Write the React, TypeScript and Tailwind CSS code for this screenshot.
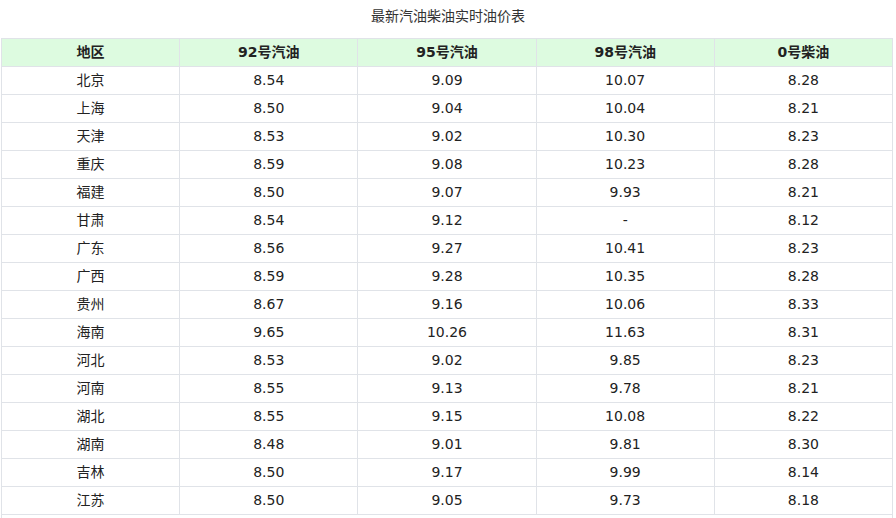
const rows: string[][] = [
["北京","8.54","9.09","10.07","8.28"],["上海","8.50","9.04","10.04","8.21"],["天津","8.53","9.02","10.30","8.23"],["重庆","8.59","9.08","10.23","8.28"],["福建","8.50","9.07","9.93","8.21"],["甘肃","8.54","9.12","-","8.12"],["广东","8.56","9.27","10.41","8.23"],["广西","8.59","9.28","10.35","8.28"],["贵州","8.67","9.16","10.06","8.33"],["海南","9.65","10.26","11.63","8.31"],["河北","8.53","9.02","9.85","8.23"],["河南","8.55","9.13","9.78","8.21"],["湖北","8.55","9.15","10.08","8.22"],["湖南","8.48","9.01","9.81","8.30"],["吉林","8.50","9.17","9.99","8.14"],["江苏","8.50","9.05","9.73","8.18"]];
export default function App(){
  return (<div className="w-[896px] h-[518px] overflow-hidden bg-white text-[#222]" style={{fontFamily:'Verdana,"DejaVu Sans","Noto Sans CJK SC",sans-serif'}}>
    <div className="h-[31px] pt-[6px] text-center text-[14px] text-[#333]">最新汽油柴油实时油价表</div>
    <table className="ml-[1px] w-[892px] border-collapse text-[14px] table-fixed mt-[7px]">
      <thead><tr className="bg-[#ddfbe0]">{["地区","92号汽油","95号汽油","98号汽油","0号柴油"].map(h=><th key={h} className="h-[28px] border border-[#e0e3e8] font-bold p-0">{h}</th>)}</tr></thead>
      <tbody>{rows.map(r=><tr key={r[0]}>{r.map((c,i)=><td key={i} className="h-[28px] border border-[#e0e3e8] text-center p-0">{c}</td>)}</tr>)}
      <tr><td colSpan={5} className="h-[28px] border border-[#e0e3e8]"></td></tr></tbody>
    </table>
  </div>);
}
